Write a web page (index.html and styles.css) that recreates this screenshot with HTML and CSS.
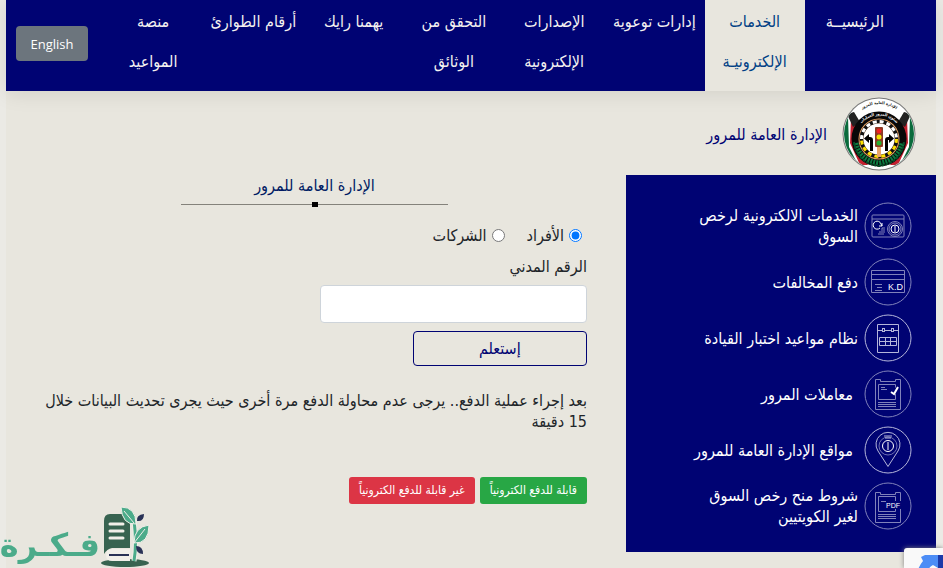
FILE: index.html
```html
<!DOCTYPE html>
<html lang="ar" dir="rtl">
<head>
    <meta charset="UTF-8">
    <meta name="viewport" content="width=device-width, initial-scale=1.0">
    <title>الإدارة العامة للمرور</title>
    <link rel="stylesheet" href="styles.css">
</head>
<body>
    <div class="container">
        <nav class="navbar">
            <ul class="menu">
                <li><a href="#">الرئيسيــة</a></li>
                <li class="active"><a href="#">الخدمات الإلكترونيـة</a></li>
                <li><a href="#">إدارات&nbsp;توعوية</a></li>
                <li><a href="#">الإصدارات الإلكترونية</a></li>
                <li><a href="#">التحقق من الوثائق</a></li>
                <li><a href="#">يهمنا رايك</a></li>
                <li><a href="#">أرقام&nbsp;الطوارئ</a></li>
                <li><a href="#">منصة المواعيد</a></li>
            </ul>
            <button type="button" class="btn-lang">English</button>
        </nav>

        <div class="row">
            <aside class="side">
                <div class="brand">
                    <svg class="emblem" viewBox="0 0 74 74">
                        <defs>
                            <clipPath id="disc"><circle cx="37" cy="37" r="35"/></clipPath>
                            <path id="arc-out" d="M10 24A30 30 0 0 1 64 24"/>
                            <path id="arc-in" d="M14 37A23.500 23.500 0 0 1 60 37"/>
                        </defs>
                        <circle cx="37" cy="37" r="36.500" fill="#777"/>
                        <circle cx="37" cy="37" r="35.500" fill="#fff"/>
                        <g clip-path="url(#disc)">
                            <path d="M0 14 14 18 15 48 24 74H0z" fill="#0a6b3c"/>
                            <path d="M74 14 60 18 59 48 50 74H74z" fill="#0a6b3c"/>
                            <path d="M6 20 12 19 12 48 22 66 16 68 7 50z" fill="#fff"/>
                            <path d="M68 20 62 19 62 48 52 66 58 68 67 50z" fill="#fff"/>
                            <path d="M9 22 15 22 14 48 26 68 18 68 8 46z" fill="#c4202f"/>
                            <path d="M65 22 59 22 60 48 48 68 56 68 66 46z" fill="#c4202f"/>
                            <path d="M5 17 12 15 18 25 11 30z" fill="#222"/>
                            <path d="M69 17 62 15 56 25 63 30z" fill="#222"/>
                        </g>
                        <circle cx="37" cy="42" r="27.500" fill="#080808"/>
                        <path d="M14 46Q17 63 37 66Q57 63 60 46" fill="none" stroke="#0c7a40" stroke-width="5" stroke-dasharray="2 1"/>
                        <path d="M12 45Q15 66 37 69Q59 66 62 45" fill="none" stroke="#064d28" stroke-width="2" stroke-dasharray="3 1"/>
                        <circle cx="37" cy="42" r="20.500" fill="#e9a568"/>
                        <circle cx="37" cy="42" r="17.500" fill="none" stroke="#111" stroke-width="4"/>
                        <path d="M19.500 42A17.500 17.500 0 0 1 54.500 42" fill="none" stroke="#fff" stroke-width="3" stroke-dasharray="4 3"/>
                        <path d="M54.500 42A17.500 17.500 0 0 1 19.500 42" fill="none" stroke="#ffe000" stroke-width="3" stroke-dasharray="4 3"/>
                        <circle cx="37" cy="42" r="15.500" fill="#fff"/>
                        <path d="M35 46h4v14h-4z" fill="#e9a568"/>
                        <rect x="33" y="30" width="8" height="20" rx="1" fill="#8b3a24"/>
                        <circle cx="37" cy="34" r="2.500" fill="#f02020"/>
                        <circle cx="37" cy="40" r="2.500" fill="#f5e400"/>
                        <circle cx="37" cy="46" r="2.500" fill="#25b030"/>
                        <path d="M31 54V43Q31 40 28 40H27V37L22 41.500 27 46V43H28V54z" fill="#000"/>
                        <path d="M43 54V43Q43 40 46 40H47V37L52 41.500 47 46V43H46V54z" fill="#000"/>
                        <text class="emblem-text" fill="#222"><textPath href="#arc-out" startOffset="50%">الإدارة العامة للمرور</textPath></text>
                        <text class="emblem-text" fill="#fff"><textPath href="#arc-in" startOffset="50%">شئون المرور العمليات</textPath></text>
                    </svg>
                    <h1>الإدارة العامة للمرور</h1>
                </div>

                <ul class="services">
                    <li>
                        <a href="#">
                            <svg class="icon" viewBox="0 0 48 48">
                                <circle cx="24" cy="24" r="23"/>
                                <rect x="8" y="13" width="32" height="22" rx="1"/>
                                <path d="M8 17h32M17 28h4M15 30h6M18 27v-1h3M14 32h6"/>
                                <g class="strong">
                                    <circle cx="31" cy="27" r="4"/>
                                    <path d="M31 24v6M16 26a4 4 0 1 1 1-4l1 2M18 21v3h-3"/>
                                </g>
                                <circle cx="31" cy="27" r="7.500"/>
                                <circle cx="31" cy="27" r="6"/>
                            </svg>
                            <span>الخدمات الالكترونية لرخص السوق</span>
                        </a>
                    </li>
                    <li>
                        <a href="#">
                            <svg class="icon" viewBox="0 0 48 48">
                                <circle cx="24" cy="24" r="23"/>
                                <path d="M7.500 12.500h33v22h-33zM7 16.500h34M7 21.500h34M11 26.500h7M13 29.500h5M11 32.500h7"/>
                                <text x="24" y="32" font-size="9">K.D</text>
                            </svg>
                            <span>دفع المخالفات</span>
                        </a>
                    </li>
                    <li>
                        <a href="#">
                            <svg class="icon bright" viewBox="0 0 48 48">
                                <circle cx="24" cy="24" r="23"/>
                                <path d="M13.500 10.500h21v28h-21zM13 16.500h5M21 16.500h6M30 16.500h5M15.500 23.500h17v8h-17zM15 27.500h18M21.500 23v9M26.500 23v9"/>
                                <rect x="18.500" y="14.500" width="2" height="3"/>
                                <rect x="27.500" y="14.500" width="2" height="3"/>
                            </svg>
                            <span>نظام مواعيد اختبار القيادة</span>
                        </a>
                    </li>
                    <li>
                        <a href="#">
                            <svg class="icon" viewBox="0 0 48 48">
                                <circle cx="24" cy="24" r="23"/>
                                <path d="M11.500 9.500h5v2h15v-2h5v30h-25zM31.500 24v5.500h-17v-15h17v3M17 17.500h4M17 19.500h6M14 32.500h18M14 34.500h18M14 36.500h18"/>
                                <path class="tick" d="M27 22 30 24 34 17"/>
                            </svg>
                            <span class="indent">معاملات المرور</span>
                        </a>
                    </li>
                    <li>
                        <a href="#">
                            <svg class="icon bright" viewBox="0 0 48 48">
                                <circle cx="24" cy="24" r="23"/>
                                <path d="M24 40.500 14 25A12 12 0 1 1 34 25zM20 10h8M21 12h6"/>
                                <circle cx="24" cy="20" r="9" opacity=".6"/>
                                <g class="strong">
                                    <circle cx="24" cy="20" r="5.500"/>
                                    <path d="M24 16v8"/>
                                </g>
                            </svg>
                            <span class="indent">مواقع الإدارة العامة للمرور</span>
                        </a>
                    </li>
                    <li>
                        <a href="#">
                            <svg class="icon" viewBox="0 0 48 48">
                                <circle cx="24" cy="24" r="23"/>
                                <path d="M36.500 19V10.500h-5v2h-15v-2h-5v30h25V27M31.500 19v-4.500h-17v15h17V27M17 19.500h5M14 32.500h18M14 34.500h18M14 36.500h18"/>
                                <text x="22" y="26" font-size="7">PDF</text>
                            </svg>
                            <span>شروط منح رخص السوق لغير الكويتيين</span>
                        </a>
                    </li>
                </ul>
            </aside>

            <main class="content">
                <h2 class="title">الإدارة العامة للمرور</h2>
                <form class="inquiry">
                    <div class="types">
                        <label><input type="radio" name="type" checked> الأفراد</label>
                        <label><input type="radio" name="type"> الشركات</label>
                    </div>
                    <label class="field-label" for="civil-id">الرقم المدني</label>
                    <input type="text" id="civil-id" class="field">
                    <button type="button" class="btn-query">إستعلم</button>
                </form>
                <p class="note">بعد إجراء عملية الدفع.. يرجى عدم محاولة الدفع مرة أخرى حيث يجرى تحديث البيانات خلال 15 دقيقة</p>
                <div class="tags">
                    <span class="tag payable">قابلة للدفع الكترونياً</span>
                    <span class="tag not-payable">غير قابلة للدفع الكترونياً</span>
                </div>
            </main>
        </div>
    </div>

    <div class="watermark">
        <svg viewBox="0 0 50 62">
            <ellipse cx="25" cy="57" rx="24" ry="4" fill="#376350"/>
            <path d="M10 8h20v34H12q-5 1-8 6V15q0-7 6-7z" fill="#376350"/>
            <path d="M12 43h18v12H12q-6 0-6-6t6-6z" fill="#f1efe9"/>
            <path d="M9 49h20" stroke="#293256" stroke-width="2"/>
            <path d="M10 18h13M10 25h13M10 32h13" stroke="#f1efe9" stroke-width="3" stroke-linecap="round"/>
            <path d="M34 55Q37 38 34 14" fill="none" stroke="#f1efe9" stroke-width="5"/>
            <path d="M34 55Q37 38 34 14" fill="none" stroke="#4bab8a" stroke-width="3"/>
            <path d="M21 1q15 0 15 17Q22 19 21 1z" fill="#4bab8a" stroke="#f1efe9" stroke-width="1"/>
            <path d="M49 19q0 19-15 18Q34 21 49 19z" fill="#4bab8a" stroke="#f1efe9" stroke-width="1"/>
            <path d="M24 5l10 12M45 23 34 37" fill="none" stroke="#f1efe9" stroke-width="1"/>
            <path d="M44 8q0 8-7 7Q36 9 44 8zM36 40q7 0 7 8Q36 48 36 40z" fill="#293256"/>
        </svg>
        <span>فـكـرة</span>
    </div>

    <div class="captcha">
        <svg viewBox="0 0 40 40">
            <path d="M18 9 22 7H35V20L30 17q-6 3-7 12H14q0-9 6-16z" fill="#4c8df6"/>
            <path d="M35 7h5v16l-5-3z" fill="#1c3aa9"/>
        </svg>
    </div>
</body>
</html>
```
FILE: styles.css
```css
* {
    box-sizing: border-box;
}
body {
    margin: 0;
    background-color: #ebeae5;
    color: #212529;
    font-family: "DejaVu Sans Condensed", "DejaVu Sans", sans-serif;
    font-size: 16px;
    line-height: 21px;
}
ul {
    list-style: none;
    margin: 0;
    padding: 0;
}
a {
    color: inherit;
    text-decoration: none;
}
h1, h2, p {
    margin: 0;
    font-size: 16px;
    font-weight: normal;
}
.container {
    margin: 0 7px 0 6px;
    min-height: 100vh;
    background-color: #e8e6de;
}
.navbar {
    display: flex;
    min-height: 91px;
    padding-right: 31px;
    background-color: #000373;
    color: #f4f2f0;
    box-shadow: 0 2px 20px rgba(0, 0, 0, 0.1);
}
.menu {
    display: grid;
    grid-template-columns: repeat(8, 1fr);
    flex: 1;
}
.menu li {
    padding: 2px 7px 9px;
    text-align: center;
    line-height: 40px;
}
.menu li:last-child {
    padding: 2px 12px 9px;
}
.menu .active {
    background-color: #e8e6de;
    color: #004085;
}
.btn-lang {
    align-self: flex-start;
    width: 72px;
    height: 35px;
    margin: 26px 15px 0 10px;
    border: 0;
    border-radius: 4px;
    background-color: #6c757d;
    color: #fff;
    font-family: "Open Sans", sans-serif;
    font-size: 13px;
    cursor: pointer;
}
.row {
    display: grid;
    grid-template-columns: 1fr 2fr;
}
.brand {
    display: flex;
    align-items: center;
    gap: 15px;
    height: 84px;
    padding: 2px 20px 0 0;
    color: #000373;
}
.emblem {
    width: 74px;
    height: 74px;
}
.emblem-text {
    font-size: 4px;
    font-weight: bold;
    text-anchor: middle;
}
.services {
    display: grid;
    gap: 8px;
    padding: 27px 24px 22px 60px;
    background-color: #000373;
    color: #fff;
}
.services a {
    display: flex;
    align-items: center;
    gap: 6px;
    height: 48px;
}
.icon {
    flex: none;
    width: 48px;
    height: 48px;
    fill: none;
    stroke: #8082ba;
}
.icon.bright {
    stroke: #b5b6da;
}
.icon text {
    fill: #fff;
    stroke: none;
    direction: ltr;
    font-family: "Liberation Sans", sans-serif;
}
.icon .strong {
    stroke: #fff;
}
.icon .tick {
    stroke: #fff;
    stroke-width: 2;
}
.services .indent {
    padding-right: 5px;
}
.content {
    padding: 84px 39px 0 36px;
}
.title {
    position: relative;
    width: 49%;
    margin: 0 auto;
    padding-bottom: 8px;
    border-bottom: 1px solid #84827b;
    color: #001a63;
    text-align: center;
}
.title::after {
    content: "";
    position: absolute;
    bottom: -3px;
    left: 50%;
    width: 6px;
    height: 5px;
    margin-left: -3px;
    background-color: #000;
}
.inquiry {
    display: flex;
    flex-direction: column;
    align-items: flex-start;
    margin-top: 20px;
}
.types {
    display: flex;
    gap: 22px;
    padding-right: 5px;
}
.types label {
    display: flex;
    align-items: center;
    gap: 5px;
}
.types input {
    width: 13px;
    height: 13px;
    margin: 0;
    accent-color: #0075ff;
}
.field-label {
    margin: 10px 0 8px;
}
.field {
    width: 49%;
    height: 38px;
    padding: 6px 12px;
    border: 1px solid #ced4da;
    border-radius: 4px;
    background-color: #fff;
    font: inherit;
}
.btn-query {
    width: 32%;
    height: 35px;
    margin-top: 8px;
    border: 1px solid #000373;
    border-radius: 4px;
    background-color: transparent;
    color: #000373;
    font: inherit;
    cursor: pointer;
}
.note {
    margin-top: 24px;
}
.tags {
    display: flex;
    gap: 5px;
    margin-top: 45px;
}
.tag {
    height: 27px;
    padding: 3px 10px;
    border-radius: 3px;
    color: #fff;
    font-size: 12px;
    white-space: nowrap;
}
.payable {
    background-color: #28a745;
}
.not-payable {
    background-color: #dc3545;
}
.watermark {
    position: fixed;
    left: 0;
    bottom: 0;
    display: flex;
    width: 150px;
    color: #4bab8a;
    font-family: "DejaVu Sans", sans-serif;
    font-size: 32px;
    font-weight: bold;
    line-height: 46px;
}
.watermark svg {
    flex: none;
    width: 50px;
    height: 62px;
}
.watermark span {
    padding-top: 16px;
}
.captcha {
    position: fixed;
    right: 0;
    bottom: 0;
    width: 39px;
    height: 20px;
    overflow: hidden;
    border-radius: 3px 0 0 0;
    background-color: #f9f9f9;
    box-shadow: 0 0 5px gray;
}
.captcha svg {
    display: block;
    width: 40px;
    height: 40px;
}
```
